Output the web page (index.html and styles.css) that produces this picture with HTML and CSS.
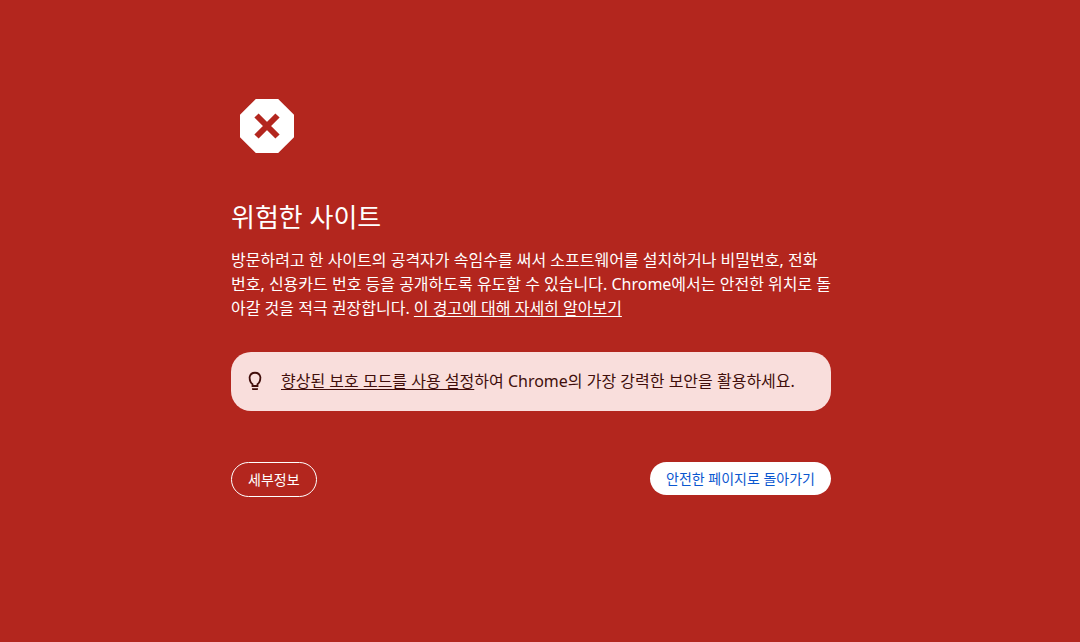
FILE: index.html
```html
<!DOCTYPE html>
<html lang="ko">
<head>
    <meta charset="UTF-8">
    <meta name="viewport" content="width=device-width, initial-scale=1.0">
    <title>보안 오류</title>
    <link rel="stylesheet" href="styles.css">
</head>
<body>
    <main class="interstitial">
        <svg class="icon" viewBox="0 0 72 72" aria-hidden="true">
            <path fill="#fff" d="M24.800 9h22.400L63 24.800v22.400L47.200 63H24.800L9 47.200V24.800z"/>
            <path stroke="#b3261e" stroke-width="6" d="M25.500 25.500l21 21M46.500 25.500l-21 21"/>
        </svg>

        <h1>위험한 사이트</h1>
        <p class="message">방문하려고 한 사이트의 공격자가 속임수를 써서 소프트웨어를 설치하거나 비밀번호, 전화<br>번호, 신용카드 번호 등을 공개하도록 유도할 수 있습니다. Chrome에서는 안전한 위치로 돌<br>아갈 것을 적극 권장합니다. <a href="#">이 경고에 대해 자세히 알아보기</a></p>

        <div class="promo">
            <svg class="bulb" viewBox="0 0 24 24" aria-hidden="true">
                <path fill="none" stroke="#410e0b" stroke-width="1.800" d="M9.500 17v-1.800C7.600 13.800 6.600 11.500 6.600 8.200a5.500 5.500 0 0 1 10.800 0c0 3.300-1 5.600-2.900 7V17z"/>
                <path fill="#410e0b" d="M9 19.300h6v.7c0 .6-.5 1.100-1.100 1.100h-3.800c-.6 0-1.100-.5-1.100-1.100z"/>
            </svg>
            <p><a href="#">향상된 보호 모드를 사용 설정</a>하여 Chrome의 가장 강력한 보안을 활용하세요.</p>
        </div>

        <div class="buttons">
            <button class="details" type="button">세부정보</button>
            <button class="primary" type="button">안전한 페이지로 돌아가기</button>
        </div>
    </main>
</body>
</html>
```

FILE: styles.css
```css
body {
    margin: 0;
    padding-right: 18px;
    background: #b3261e;
    color: #fff;
    font-family: "Noto Sans", "Noto Sans CJK KR", sans-serif;
    font-size: 16px;
    line-height: 24px;
}

.interstitial {
    box-sizing: border-box;
    max-width: 600px;
    margin: 0 auto;
    padding-top: 90px;
}

.icon {
    display: block;
    width: 72px;
    height: 72px;
}

h1 {
    margin: 40px 0 16px;
    font-size: 26px;
    font-weight: 400;
    line-height: 30px;
}

p {
    margin: 0;
}

a {
    color: inherit;
    text-underline-offset: 2px;
}

.message {
    margin-right: -4px;
    word-break: break-all;
}

.promo {
    display: flex;
    align-items: center;
    gap: 14px;
    margin-top: 32px;
    padding: 17px 12px 18px;
    border-radius: 20px;
    background: #f9dedc;
    color: #410e0b;
}

.bulb {
    flex: none;
    width: 24px;
    height: 24px;
}

.buttons {
    display: flex;
    justify-content: space-between;
    align-items: flex-start;
    margin-top: 51px;
}

button {
    padding: 8px 16px;
    border: 0;
    border-radius: 20px;
    font-family: inherit;
    font-size: 14px;
    line-height: 17px;
    cursor: pointer;
}

.details {
    border: 1px solid #fff;
    background: transparent;
    color: #fff;
}

.primary {
    background: #fff;
    color: #0b57d0;
}
```
